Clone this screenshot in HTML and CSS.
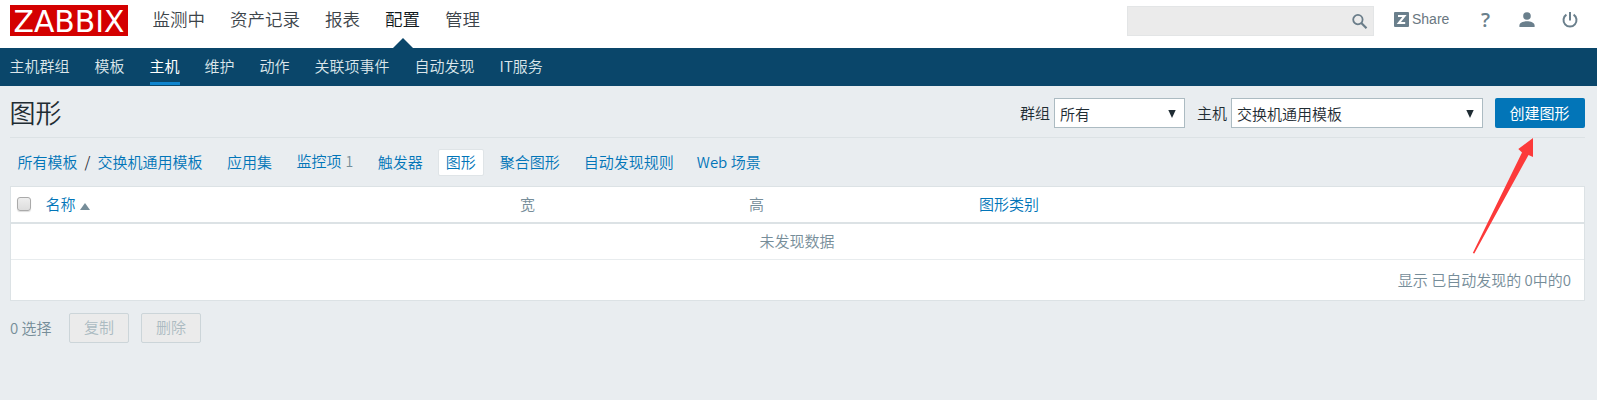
FILE: index.html
```html
<!DOCTYPE html>
<html lang="zh-CN">
<head>
<meta charset="utf-8">
<title>图形</title>
<link rel="stylesheet" href="styles.css">
</head>
<body>
<header class="top">
  <div class="logo"><svg width="118" height="31" viewBox="0 0 118 31"><text x="3.5" y="26.5" textLength="111" lengthAdjust="spacingAndGlyphs" class="logo-text">ZABBIX</text></svg></div>
  <nav class="main-nav">
    <a>监测中</a><a>资产记录</a><a>报表</a><a class="current">配置</a><a>管理</a>
  </nav>
  <div class="search">
    <svg width="16" height="16" viewBox="0 0 16 16" fill="none" stroke="#6a7d89"><circle cx="5.900" cy="5.600" r="4.700" stroke-width="1.800"/><path d="M9.300 9l5.200 5.200" stroke-width="2.200"/></svg>
  </div>
  <a class="share"><span class="z"><svg width="15" height="15" viewBox="0 0 15 15" fill="none" stroke="#fff" stroke-width="2"><path d="M4 4h6.500L4.800 11h6.400"/></svg></span>Share</a>
  <a class="help">?</a>
  <svg class="user" width="16" height="16" viewBox="0 0 16 16" fill="#6a7f8c"><circle cx="8" cy="4" r="3.800"/><path d="M.4 15v-1.500C.4 10.700 4.500 9.300 8 9.300s7.600 1.400 7.600 4.200V15z"/></svg>
  <svg class="power" width="16" height="16" viewBox="0 0 16 16" fill="none" stroke="#6a7f8c" stroke-width="2"><path d="M8 0v8.500M4.400 2.600a6.500 6.500 0 1 0 7.200 0"/></svg>
</header>
<nav class="sub-nav">
  <a>主机群组</a><a>模板</a><a class="selected">主机</a><a>维护</a><a>动作</a><a>关联项事件</a><a>自动发现</a><a>IT服务</a>
</nav>
<main>
  <div class="title-bar">
    <h1>图形</h1>
    <div class="filters">
      <span class="label">群组</span><div class="select group">所有<svg width="8" height="8" viewBox="0 0 8 8"><path d="M.3 0h7.400L4 8z"/></svg></div>
      <span class="label second">主机</span><div class="select host">交换机通用模板<svg width="8" height="8" viewBox="0 0 8 8"><path d="M.3 0h7.400L4 8z"/></svg></div>
      <button class="create">创建图形</button>
    </div>
  </div>
  <nav class="tabs">
    <a>所有模板</a><span class="slash">/</span><a>交换机通用模板</a><a class="tab">应用集</a><a class="tab items">监控项<sup>1</sup></a><a class="tab">触发器</a><a class="tab active">图形</a><a class="tab">聚合图形</a><a class="tab">自动发现规则</a><a class="tab">Web 场景</a>
  </nav>
  <section class="table">
    <div class="row head">
      <span class="check"></span><a class="name">名称<svg width="10" height="7" viewBox="0 0 10 7"><path d="M5 0l5 7H0z" fill="#768d99"/></svg></a><span>宽</span><span>高</span><a>图形类别</a>
    </div>
    <div class="row empty">未发现数据</div>
    <div class="row stats">显示 已自动发现的 0中的0</div>
  </section>
  <footer class="actions"><span class="count">0 选择</span><button disabled>复制</button><button disabled>删除</button></footer>
</main>
<svg class="arrow" width="62" height="118" viewBox="0 0 62 118"><path d="M61 0v19l-4.500-2L2.300 115.500l-1.500-.6L50 14.500l-3.700-3.500z" fill="#fc3a3a"/></svg>
</body>
</html>
```
FILE: styles.css
```css
* { box-sizing: border-box; }
body {
  margin: 0;
  height: 400px;
  overflow: hidden;
  background: #e9edf0;
  color: #1f2c33;
  font: 350 15px/20px "Noto Sans CJK SC", sans-serif;
  white-space: nowrap;
}
a { color: #0275b8; }
svg { display: block; flex: none; overflow: visible; }
.top { display: flex; height: 48px; background: #fff; padding-left: 10px; }
.logo { width: 118px; height: 31px; margin-top: 5px; background: #d40000; }
.logo-text { font: 400 31px/31px "DejaVu Sans", sans-serif; fill: #fff; }
.main-nav { display: flex; gap: 25px; margin-left: 24.5px; font-size: 17.5px; line-height: 38px; }
.main-nav a { color: #3c444a; height: 48px; }
.main-nav .current { display: flex; flex-direction: column; align-items: center; color: #10181c; }
.current::after { content: ""; border: solid transparent; border-width: 0 10px 10px; border-bottom-color: #0a466a; }
.search { display: flex; justify-content: flex-end; width: 247px; height: 30px; margin: 6px 20px 0 auto; padding: 7px 5px; background: #ebebeb; border: 1px solid #e3e5e6; }
.share { display: flex; gap: 3px; width: 87px; margin-top: 12px; color: #6a7781; font: 14px/15px "Liberation Sans", sans-serif; }
.z { width: 15px; height: 15px; background: #6a7f8c; border-radius: 1px; }
.help { width: 38px; margin-top: 8px; color: #6a7f8c; font: 600 20px/24px "Open Sans", sans-serif; }
.user { margin: 12px 27px 0 0; }
.power { margin: 12px 19px 0 0; }
.sub-nav { display: flex; gap: 25px; height: 38px; padding-left: 9.5px; background: #0a466a; line-height: 36px; }
.sub-nav a { height: 37px; color: #dce6eb; }
.sub-nav .selected { color: #fff; font-weight: 400; border-bottom: 3px solid #0f85cf; }
main { padding: 0 12px 0 10px; }
.title-bar { display: flex; justify-content: space-between; height: 52px; border-bottom: 1px solid #dce2e5; }
h1 { margin: 9px 0 0 -.5px; font-size: 26px; line-height: 34px; font-weight: 350; }
.filters { display: flex; padding-top: 12px; line-height: 29px; }
.label { margin-right: 4px; }
.second { margin-left: 12px; }
.select { display: flex; justify-content: space-between; height: 30px; padding: 0 8px 0 5px; border: 1px solid #acbbc2; background: #fff; }
.select svg { margin-top: 11px; fill: #1f2c33; }
.group { width: 131px; }
.host { width: 252px; }
button { font: inherit; border-radius: 2px; height: 30px; padding: 0 0 1px; }
.create { width: 90px; margin-left: 12px; padding-right: 1px; color: #fff; background: #0275b8; border: 0; font-weight: 400; }
.tabs { display: flex; height: 48px; padding: 11px 0 0 7.500px; line-height: 25px; }
.slash { width: 20px; text-align: center; }
.tab { margin-left: 24.500px; }
sup { margin-left: 4px; color: #768d99; font-size: 14px; line-height: 1; vertical-align: baseline; }
.tabs .active { width: 46px; height: 27px; margin: 0 -9px 0 15px; text-align: center; background: #fff; border: 1px solid #dfe4e7; border-radius: 2px; line-height: 23px; }
.active + .tab { margin-left: 25px; }
.tab + .items { margin-left: 24.500px; line-height: 24px; }
.active ~ .tab:nth-last-child(2) { margin-left: 24px; }
.active ~ .tab:last-child { margin-left: 23px; }
.table { height: 115px; background: #fff; border: 1px solid #dce2e5; color: #768d99; }
.row { border-bottom: 1px solid #e8ecee; }
.head { display: grid; grid-template-columns: 34.500px 474.500px 229px 230px 1fr; height: 37px; border-bottom: 2px solid #dce2e5; line-height: 33px; }
.check { width: 14px; height: 14px; margin: 10px 0 0 6px; border: 1px solid #aaa; border-radius: 3px; background: linear-gradient(#eee, #ddd); box-shadow: 0 1px 1px #ddd; }
.name { display: flex; gap: 4px; }
.name svg { margin-top: 16px; }
.empty { height: 36px; text-align: center; line-height: 33px; padding-right: 1px; }
.stats { height: 40px; border: 0; text-align: right; padding-right: 13px; line-height: 39px; }
.actions { display: flex; gap: 12px; padding-top: 12px; line-height: 30px; color: #768d99; }
.count { width: 47px; }
.actions button { width: 60px; padding-bottom: 3px; line-height: 24px; background: #ebebeb; border: 1px solid #ccd5d9; color: #acbbc2; }
.arrow { position: absolute; left: 1472px; top: 138px; }
```
